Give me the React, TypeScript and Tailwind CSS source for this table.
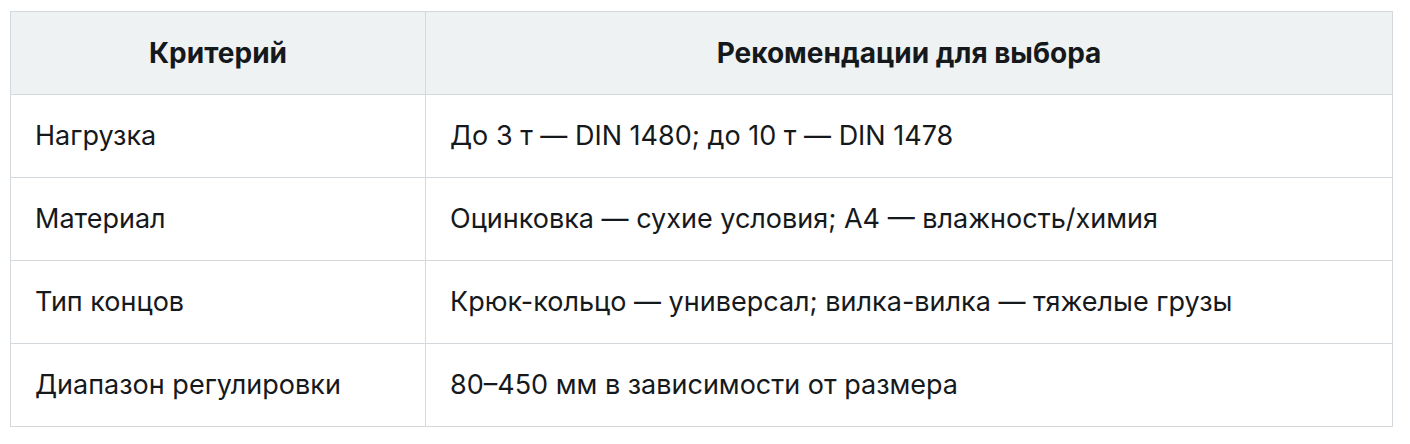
const rows: [string, string][] = [
  ["Нагрузка", "До 3 т — DIN 1480; до 10 т — DIN 1478"],
  ["Материал", "Оцинковка — сухие условия; А4 — влажность/химия"],
  ["Тип концов", "Крюк-кольцо — универсал; вилка-вилка — тяжелые грузы"],
  ["Диапазон регулировки", "80–450 мм в зависимости от размера"],
];

export default function App() {
  return (
    <div className="bg-white pl-[10px] pt-[11px] w-[1410px] h-[444px]" style={{ fontFamily: "Inter, 'Noto Sans', sans-serif" }}>
      <table className="border-collapse table-fixed w-[1383px] text-[27px] text-[#16191c]">
        <colgroup>
          <col className="w-[415px]" />
          <col />
        </colgroup>
        <thead>
          <tr className="bg-[#eef2f3] h-[83px]">
            <th className="border border-[#d3d9dc] font-bold text-center text-[28px] px-6">Критерий</th>
            <th className="border border-[#d3d9dc] font-bold text-center text-[28px] px-6">Рекомендации для выбора</th>
          </tr>
        </thead>
        <tbody>
          {rows.map(([a, b]) => (
            <tr key={a} className="h-[83px]">
              <td className="border border-[#d3d9dc] px-6 text-left">{a}</td>
              <td className="border border-[#d3d9dc] px-6 text-left">{b}</td>
            </tr>
          ))}
        </tbody>
      </table>
    </div>
  );
}
